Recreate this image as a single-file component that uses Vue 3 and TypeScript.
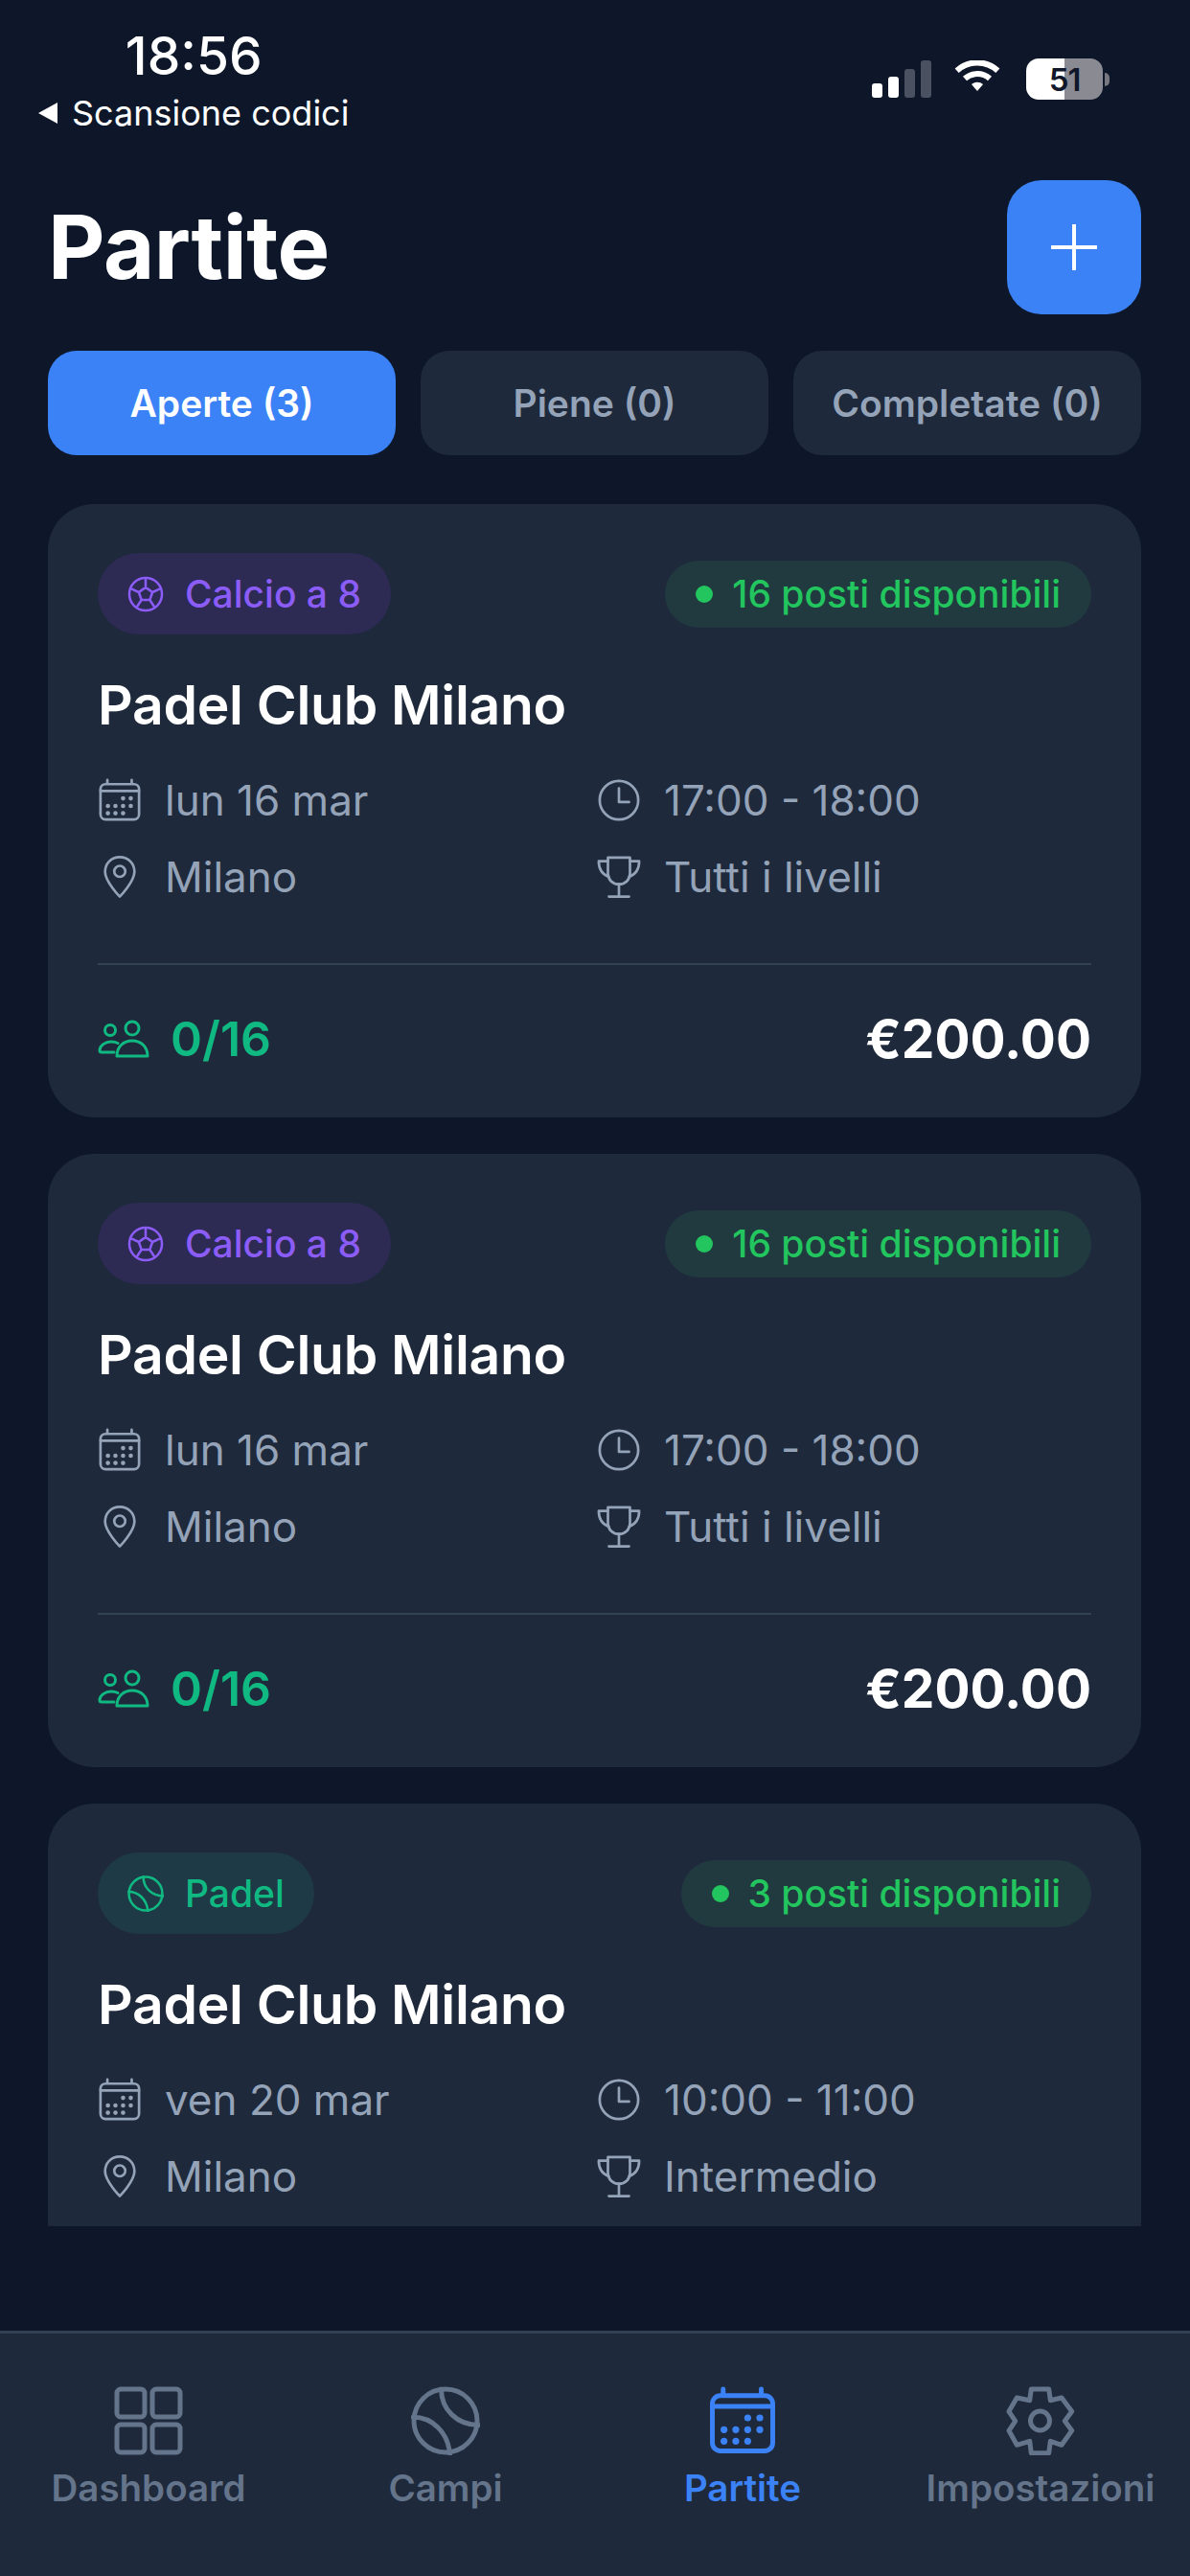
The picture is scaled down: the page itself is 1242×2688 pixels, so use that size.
<template>
  <div class="page">
    <svg class="defs" width="0" height="0" aria-hidden="true">
      <symbol id="i-calendar" viewBox="0 0 48 48">
        <rect x="3" y="6.500" width="42" height="38.500" rx="5.500" />
        <path d="M3 14h42M10.500 2v4M37 2v4" />
        <g fill="currentColor" stroke="none">
          <circle cx="27.600" cy="22" r="2.400" /><circle cx="36" cy="22" r="2.400" />
          <circle cx="11.100" cy="30.200" r="2.400" /><circle cx="19.300" cy="30.200" r="2.400" /><circle cx="27.600" cy="30.200" r="2.400" /><circle cx="36" cy="30.200" r="2.400" />
          <circle cx="11.100" cy="38.200" r="2.400" /><circle cx="19.300" cy="38.200" r="2.400" /><circle cx="27.600" cy="38.200" r="2.400" />
        </g>
      </symbol>
      <symbol id="i-pin" viewBox="0 0 48 48">
        <path d="M24 2.500C14.500 2.500 8 9.600 8 18.500 8 29 24 45.500 24 45.500S40 29 40 18.500C40 9.600 33.500 2.500 24 2.500z" />
        <circle cx="24" cy="18" r="6" />
      </symbol>
      <symbol id="i-clock" viewBox="0 0 48 48">
        <circle cx="24" cy="24" r="21" />
        <path d="M24 11v15h11" />
      </symbol>
      <symbol id="i-trophy" viewBox="0 0 48 48">
        <path d="M12 3h24v17c0 7-5 12-12 12s-12-5-12-12z" />
        <path d="M12 7H2c0 8 3 14 11 17M36 7h10c0 8-3 14-11 17M24 32v13M13 45.500h22" />
      </symbol>
      <symbol id="i-people" viewBox="0 0 54 40">
        <circle cx="13" cy="11" r="5.500" />
        <circle cx="36" cy="9" r="7" />
        <path d="M20 38c0-10 7-16 16-16s16 6 16 16z" />
        <path d="M21 24.500c-2-1-4.500-1.500-7-1.500-6 0-12 4-12 9 0 1.500 1 2 2 2h13" />
      </symbol>
      <symbol id="i-ball" viewBox="0 0 48 48">
        <circle cx="24" cy="24" r="22" />
        <path d="M21 2c0 14 11 25 26 25M1.500 21.500c13 0 24 10 25.500 25.500" />
      </symbol>
      <symbol id="i-soccer" viewBox="0 0 48 48">
        <circle cx="24" cy="24" r="21.500" />
        <path d="M24 15l9 6.500-3.500 10h-11L15 21.500zM24 15V4M33 21.500l10-4.500M29.500 31.500l6.500 10M18.500 31.500l-6.500 10M15 21.500L5 17" />
      </symbol>
      <symbol id="i-grid" viewBox="0 0 72 72">
        <rect x="3" y="3" width="29" height="29" rx="4" /><rect x="40" y="3" width="29" height="29" rx="4" />
        <rect x="3" y="40" width="29" height="29" rx="4" /><rect x="40" y="40" width="29" height="29" rx="4" />
      </symbol>
      <symbol id="i-gear" viewBox="0 0 72 72">
        <path d="M26.300 3h18.400l1.600 11.700L58 12l10.700 14.300-7.400 10 7.400 10L58 61.300l-11.700-4-1.600 12.400H26.300l-1.600-12.400-13.400 4L3 46.300l6.700-10-6.700-10L11.300 12l13.400 2.700z" />
        <circle cx="35.500" cy="36" r="10" />
      </symbol>
    </svg>

    <div class="status">
      <div class="status-left">
        <span class="time">18:56</span>
        <span class="back"><i class="back-arrow"></i>Scansione codici</span>
      </div>
      <div class="status-right">
        <span class="signal"><i class="on s1"></i><i class="on s2"></i><i class="s3"></i><i class="s4"></i></span>
        <svg class="wifi" viewBox="0 0 56 40" width="52" height="39">
          <path d="M28 33.500l6.500-7.500a10 10 0 0 0-13 0z" fill="#fff" stroke="none" />
          <path d="M14 19.500a21 21 0 0 1 28 0M5 10.500a34 34 0 0 1 46 0" fill="none" stroke="#fff" stroke-width="6.500" />
        </svg>
        <span class="battery"><span class="battery-num">51</span></span>
        <i class="battery-tip"></i>
      </div>
    </div>

    <header class="head">
      <h1>Partite</h1>
      <button class="add" type="button" aria-label="Nuova partita">
        <svg viewBox="0 0 48 48" width="48" height="48"><path d="M24 1v46M1 24h46" /></svg>
      </button>
    </header>

    <nav class="tabs">
      <button v-for="t in tabs" :key="t.label" class="tab" :class="{ active: t.active }" type="button">{{ t.label }}</button>
    </nav>

    <main class="list">
      <article v-for="(m, i) in partite" :key="i" class="card">
        <div class="card-top">
          <span class="chip" :class="m.sport">
            <svg class="chip-icon"><use :href="m.sport === 'calcio' ? '#i-soccer' : '#i-ball'" /></svg>
            {{ m.sportLabel }}
          </span>
          <span class="posti"><i class="dot"></i>{{ m.posti }} posti disponibili</span>
        </div>
        <h2>{{ m.club }}</h2>
        <div class="info">
          <div class="info-item"><svg class="ico"><use href="#i-calendar" /></svg>{{ m.data }}</div>
          <div class="info-item"><svg class="ico"><use href="#i-clock" /></svg>{{ m.ora }}</div>
          <div class="info-item"><svg class="ico"><use href="#i-pin" /></svg>{{ m.citta }}</div>
          <div class="info-item"><svg class="ico"><use href="#i-trophy" /></svg>{{ m.livello }}</div>
        </div>
        <!-- l'ultima card e' tagliata dallo scroll, il footer non si vede -->
        <div v-if="m.iscritti" class="foot">
          <span class="count"><svg class="ico-people"><use href="#i-people" /></svg>{{ m.iscritti }}</span>
          <span class="price">{{ m.prezzo }}</span>
        </div>
      </article>
    </main>

    <footer class="bar">
      <div v-for="n in navItems" :key="n.label" class="bar-item" :class="{ active: n.active }">
        <svg class="bar-icon" :class="{ thin: n.thin }"><use :href="n.icon" /></svg>
        <span>{{ n.label }}</span>
      </div>
    </footer>
  </div>
</template>

<script setup lang="ts">
interface Partita {
  sport: string
  sportLabel: string
  posti: number
  club: string
  data: string
  ora: string
  citta: string
  livello: string
  iscritti?: string
  prezzo?: string
}

const tabs = [
  { label: 'Aperte (3)', active: true },
  { label: 'Piene (0)', active: false },
  { label: 'Completate (0)', active: false },
]

const partite: Partita[] = [
  { sport: 'calcio', sportLabel: 'Calcio a 8', posti: 16, club: 'Padel Club Milano', data: 'lun 16 mar', ora: '17:00 - 18:00', citta: 'Milano', livello: 'Tutti i livelli', iscritti: '0/16', prezzo: '€200.00' },
  { sport: 'calcio', sportLabel: 'Calcio a 8', posti: 16, club: 'Padel Club Milano', data: 'lun 16 mar', ora: '17:00 - 18:00', citta: 'Milano', livello: 'Tutti i livelli', iscritti: '0/16', prezzo: '€200.00' },
  { sport: 'padel', sportLabel: 'Padel', posti: 3, club: 'Padel Club Milano', data: 'ven 20 mar', ora: '10:00 - 11:00', citta: 'Milano', livello: 'Intermedio' },
]

const navItems = [
  { label: 'Dashboard', icon: '#i-grid', active: false, thin: false },
  { label: 'Campi', icon: '#i-ball', active: false, thin: true },
  { label: 'Partite', icon: '#i-calendar', active: true, thin: true },
  { label: 'Impostazioni', icon: '#i-gear', active: false, thin: false },
]
</script>

<style>
html,
body {
  margin: 0;
  background: #0d1729;
}
</style>

<style scoped>
.page {
  width: 1242px;
  height: 2688px;
  display: flex;
  flex-direction: column;
  background: #0d1729;
  font-family: Inter, "Liberation Sans", sans-serif;
  color: #fff;
  overflow: hidden;
}

.defs {
  position: absolute;
}

.ico,
.chip-icon,
.ico-people,
.bar-icon {
  fill: none;
  stroke: currentColor;
  stroke-linejoin: round;
  stroke-linecap: round;
}

.status {
  height: 188px;
  box-sizing: border-box;
  padding: 27px 84px 0 40px;
  display: flex;
  justify-content: space-between;
  align-items: flex-start;
  flex-shrink: 0;
}

.status-left {
  display: flex;
  flex-direction: column;
  align-items: center;
}

.time {
  font-size: 55px;
  font-weight: 500;
  line-height: 62px;
}

.back {
  font-size: 36px;
  line-height: 44px;
  margin-top: 7px;
  display: flex;
  align-items: center;
  gap: 15px;
}

.back-arrow {
  width: 0;
  height: 0;
  border-top: 11px solid transparent;
  border-bottom: 11px solid transparent;
  border-right: 20px solid #fff;
}

.status-right {
  display: flex;
  align-items: center;
  margin-top: 34px;
}

.signal {
  display: flex;
  align-items: flex-end;
  gap: 6px;
  height: 39px;
  margin-right: 22px;
}

.signal i {
  width: 11px;
  border-radius: 3px;
  background: #4a5161;
}

.signal .on {
  background: #fff;
}

.s1 { height: 15px; }
.s2 { height: 22px; }
.s3 { height: 30px; }
.s4 { height: 39px; }

.wifi {
  margin-right: 25px;
}

.battery {
  width: 80px;
  height: 43px;
  border-radius: 13px;
  background: linear-gradient(90deg, #fff 0 50%, #8a8b92 50% 100%);
  display: flex;
  align-items: center;
  justify-content: center;
}

.battery-num {
  color: #0f172a;
  font-size: 33px;
  font-weight: 600;
  letter-spacing: -1px;
}

.battery-tip {
  width: 5px;
  height: 14px;
  margin-left: 2px;
  border-radius: 0 6px 6px 0;
  background: #77787f;
}

.head {
  display: flex;
  justify-content: space-between;
  align-items: center;
  padding: 0 51px 0 50px;
  height: 139px;
  flex-shrink: 0;
}

h1 {
  margin: 0;
  font-size: 92px;
  font-weight: 700;
  letter-spacing: -0.5px;
}

.add {
  width: 140px;
  height: 140px;
  border: 0;
  border-radius: 36px;
  background: #3b82f6;
  display: flex;
  align-items: center;
  justify-content: center;
}

.add path {
  stroke: #fff;
  stroke-width: 4;
  stroke-linecap: round;
  fill: none;
}

.tabs {
  display: grid;
  grid-template-columns: repeat(3, 1fr);
  gap: 26px;
  margin: 39px 51px 0 50px;
  flex-shrink: 0;
}

.tab {
  height: 109px;
  border: 0;
  border-radius: 30px;
  background: #1e293b;
  color: #94a3b8;
  font-family: inherit;
  font-size: 39px;
  font-weight: 600;
  padding: 0;
}

.tab.active {
  background: #3b82f6;
  color: #fff;
}

.list {
  height: 1797px;
  margin: 51px 51px 0 50px;
  overflow: hidden;
  display: flex;
  flex-direction: column;
  gap: 38px;
  flex-shrink: 0;
}

.card {
  background: #1e293b;
  border-radius: 48px;
  padding: 51px 52px 0;
  height: 640px;
  box-sizing: border-box;
  flex-shrink: 0;
}

.card-top {
  display: flex;
  justify-content: space-between;
  align-items: center;
}

.chip {
  height: 85px;
  border-radius: 43px;
  padding: 0 31px;
  display: flex;
  align-items: center;
  gap: 22px;
  font-size: 39px;
  font-weight: 500;
}

.chip.calcio {
  background: #2d2a54;
  color: #8b5cf6;
}

.chip.padel {
  background: #1f3a47;
  color: #10b981;
}

.chip-icon {
  width: 38px;
  height: 38px;
  stroke-width: 3.200;
}

.posti {
  height: 70px;
  border-radius: 35px;
  background: #203a40;
  color: #22c55e;
  padding: 0 32px;
  display: flex;
  align-items: center;
  font-size: 39px;
  font-weight: 500;
}

.dot {
  width: 18px;
  height: 18px;
  border-radius: 50%;
  background: #22c55e;
  margin-right: 20px;
}

h2 {
  margin: 42px 0 0;
  font-size: 57px;
  line-height: 64px;
  font-weight: 600;
  letter-spacing: -0.3px;
}

.info {
  display: grid;
  grid-template-columns: 521px 1fr;
  row-gap: 22px;
  margin-top: 38px;
}

.info-item {
  display: flex;
  align-items: center;
  gap: 24px;
  height: 58px;
  color: #94a3b8;
  font-size: 44px;
}

.ico {
  width: 46px;
  height: 46px;
  stroke-width: 2.800;
  flex-shrink: 0;
}

.foot {
  margin-top: 61px;
  border-top: 2px solid #334155;
  padding-top: 44px;
  display: flex;
  justify-content: space-between;
  align-items: center;
}

.count {
  display: flex;
  align-items: center;
  gap: 22px;
  color: #10b981;
  font-size: 50px;
  font-weight: 600;
}

.ico-people {
  width: 54px;
  height: 40px;
  stroke-width: 3;
}

.price {
  font-size: 55px;
  font-weight: 700;
}

.bar {
  flex: 1;
  background: #1e293b;
  border-top: 3px solid #334155;
  display: grid;
  grid-template-columns: 310px 310px 310px 1fr;
  margin-top: 109px;
  padding-top: 55px;
}

.bar-item {
  display: flex;
  flex-direction: column;
  align-items: center;
  color: #64748b;
  font-size: 38.500px;
  font-weight: 600;
}

.bar-item.active {
  color: #3b82f6;
}

.bar-icon {
  width: 72px;
  height: 72px;
  stroke-width: 5;
  margin-bottom: 11px;
}

.bar-icon.thin {
  stroke-width: 3.300;
}
</style>
